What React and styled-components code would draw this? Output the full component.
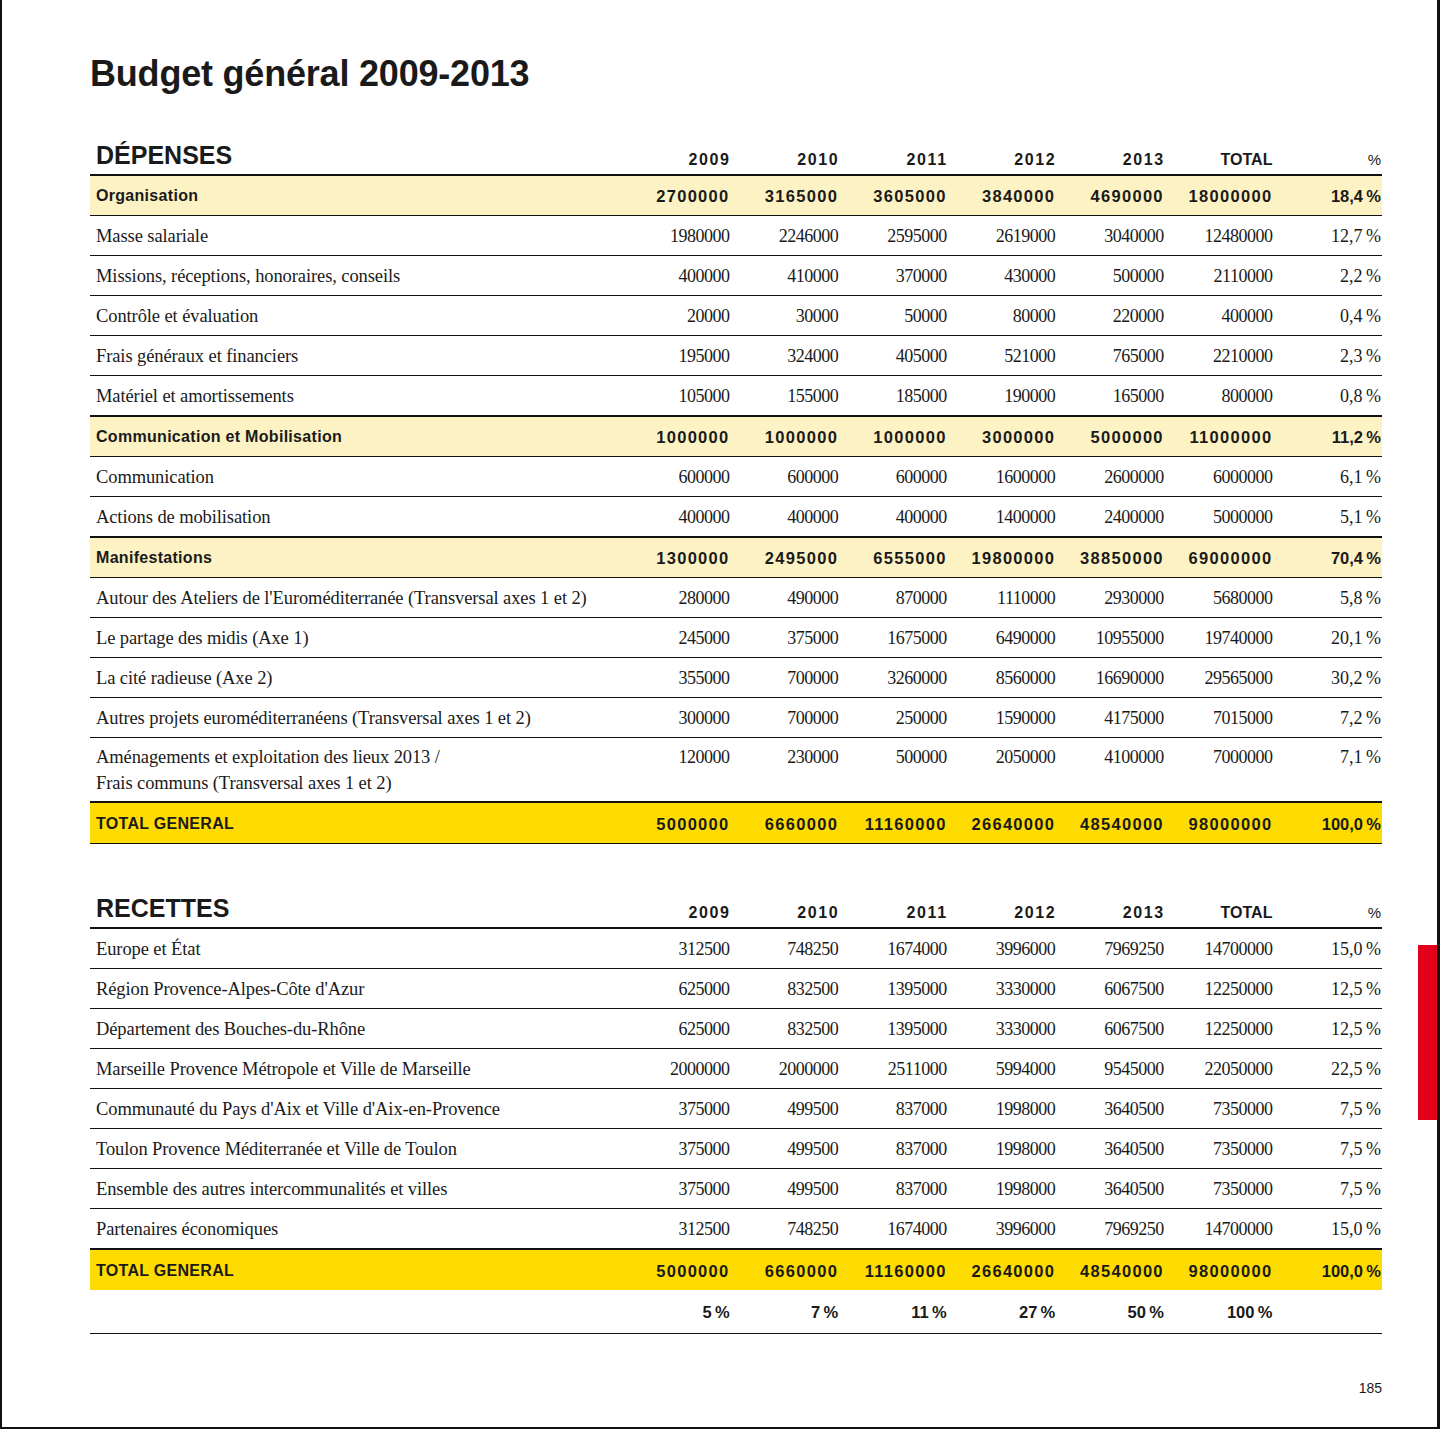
import styled, { createGlobalStyle } from "styled-components"

const GlobalStyle = createGlobalStyle`
  html, body { margin: 0; padding: 0; background: #fff; }
  * { box-sizing: border-box; }
`

const NBSP = "\u202f"

const depenses = [
  { kind: "group", label: "Organisation", v: ["2700000", "3165000", "3605000", "3840000", "4690000", "18000000", "18,4"] },
  { label: "Masse salariale", v: ["1980000", "2246000", "2595000", "2619000", "3040000", "12480000", "12,7"] },
  { label: "Missions, réceptions, honoraires, conseils", v: ["400000", "410000", "370000", "430000", "500000", "2110000", "2,2"] },
  { label: "Contrôle et évaluation", v: ["20000", "30000", "50000", "80000", "220000", "400000", "0,4"] },
  { label: "Frais généraux et financiers", v: ["195000", "324000", "405000", "521000", "765000", "2210000", "2,3"] },
  { label: "Matériel et amortissements", v: ["105000", "155000", "185000", "190000", "165000", "800000", "0,8"] },
  { kind: "group", rule: true, label: "Communication et Mobilisation", v: ["1000000", "1000000", "1000000", "3000000", "5000000", "11000000", "11,2"] },
  { label: "Communication", v: ["600000", "600000", "600000", "1600000", "2600000", "6000000", "6,1"] },
  { label: "Actions de mobilisation", v: ["400000", "400000", "400000", "1400000", "2400000", "5000000", "5,1"] },
  { kind: "group", rule: true, label: "Manifestations", v: ["1300000", "2495000", "6555000", "19800000", "38850000", "69000000", "70,4"] },
  { label: "Autour des Ateliers de l'Euroméditerranée (Transversal axes 1 et 2)", v: ["280000", "490000", "870000", "1110000", "2930000", "5680000", "5,8"] },
  { label: "Le partage des midis (Axe 1)", v: ["245000", "375000", "1675000", "6490000", "10955000", "19740000", "20,1"] },
  { label: "La cité radieuse (Axe 2)", v: ["355000", "700000", "3260000", "8560000", "16690000", "29565000", "30,2"] },
  { label: "Autres projets euroméditerranéens (Transversal axes 1 et 2)", v: ["300000", "700000", "250000", "1590000", "4175000", "7015000", "7,2"] },
  { multi: true, label: ["Aménagements et exploitation des lieux 2013 /", "Frais communs (Transversal axes 1 et 2)"], v: ["120000", "230000", "500000", "2050000", "4100000", "7000000", "7,1"] },
  { kind: "total", rule: true, label: "TOTAL GENERAL", v: ["5000000", "6660000", "11160000", "26640000", "48540000", "98000000", "100,0"] },
]

const recettes = [
  { label: "Europe et État", v: ["312500", "748250", "1674000", "3996000", "7969250", "14700000", "15,0"] },
  { label: "Région Provence-Alpes-Côte d'Azur", v: ["625000", "832500", "1395000", "3330000", "6067500", "12250000", "12,5"] },
  { label: "Département des Bouches-du-Rhône", v: ["625000", "832500", "1395000", "3330000", "6067500", "12250000", "12,5"] },
  { label: "Marseille Provence Métropole et Ville de Marseille", v: ["2000000", "2000000", "2511000", "5994000", "9545000", "22050000", "22,5"] },
  { label: "Communauté du Pays d'Aix et Ville d'Aix-en-Provence", v: ["375000", "499500", "837000", "1998000", "3640500", "7350000", "7,5"] },
  { label: "Toulon Provence Méditerranée et Ville de Toulon", v: ["375000", "499500", "837000", "1998000", "3640500", "7350000", "7,5"] },
  { label: "Ensemble des autres intercommunalités et villes", v: ["375000", "499500", "837000", "1998000", "3640500", "7350000", "7,5"] },
  { label: "Partenaires économiques", v: ["312500", "748250", "1674000", "3996000", "7969250", "14700000", "15,0"] },
  { kind: "total", rule: true, label: "TOTAL GENERAL", v: ["5000000", "6660000", "11160000", "26640000", "48540000", "98000000", "100,0"] },
]

const shares = ["5", "7", "11", "27", "50", "100"]
const years = ["2009", "2010", "2011", "2012", "2013"]

const sans = '"Liberation Sans", Arial, sans-serif'
const serif = '"Liberation Serif", "Times New Roman", serif'

const Page = styled.div`
  position: relative;
  width: 1440px;
  height: 1429px;
  padding: 54px 55px 0 88px;
  border-left: 2px solid #111;
  border-right: 3px solid #111;
  border-bottom: 2px solid #111;
  background: #fff;
  color: #1a1a1a;
  display: flex;
  flex-direction: column;
`

const Title = styled.h1`
  margin: 0 0 47px 0;
  font-family: ${sans};
  font-weight: 700;
  font-size: 36px;
  line-height: 40px;
  letter-spacing: -0.2px;
`

const Table = styled.section`
  display: flex;
  flex-direction: column;
  margin-bottom: ${(p) => p.$gap || 0}px;
`

const cols = "532px repeat(7, 1fr)"

const Head = styled.div`
  display: grid;
  grid-template-columns: ${cols};
  align-items: end;
  height: 35px;
  padding-bottom: 8px;
  border-bottom: 2px solid #111;
`

const SectionName = styled.h2`
  margin: 0;
  padding-left: 6px;
  font-family: ${sans};
  font-weight: 700;
  font-size: 25px;
  line-height: 28px;
`

const HeadCell = styled.div`
  text-align: right;
  padding-right: ${(p) => (p.$tight ? 1 : 0)}px;
  font-family: ${sans};
  font-size: ${(p) => (p.$light ? 15 : 16)}px;
  font-weight: ${(p) => (p.$light ? 400 : 700)};
  letter-spacing: ${(p) => (p.$tight ? 0 : 1.6)}px;
  line-height: 18px;
`

const Row = styled.div`
  display: grid;
  grid-template-columns: ${cols};
  align-items: ${(p) => (p.$multi ? "start" : "center")};
  min-height: ${(p) => (p.$rule ? 41 : 40)}px;
  border-top: ${(p) => (p.$rule ? "1px solid #111" : "none")};
  border-bottom: ${(p) => (p.$last ? "0" : "1px solid #111")};
  background: ${(p) =>
    p.$kind === "group" ? "#fdf2c3" : p.$kind === "total" ? "#ffdc00" : "transparent"};
`

const EndRule = styled.div`
  border-top: 1px solid #111;
`

const Label = styled.div`
  padding: 6px 0 5px 6px;
  line-height: 26px;
  font-family: ${(p) => (p.$bold ? sans : serif)};
  font-weight: ${(p) => (p.$bold ? 700 : 400)};
  font-size: ${(p) => (p.$bold ? 16 : 18.5)}px;
  letter-spacing: ${(p) => (p.$bold ? 0.3 : -0.1)}px;
  white-space: nowrap;
`

const Num = styled.div`
  padding: 6px 1px 5px 0;
  line-height: 26px;
  text-align: right;
  white-space: nowrap;
  font-family: ${(p) => (p.$bold ? sans : serif)};
  font-weight: ${(p) => (p.$bold ? 700 : 400)};
  font-size: ${(p) => (p.$bold ? 16.5 : 18)}px;
  letter-spacing: ${(p) => (p.$bold ? 1.3 : -0.5)}px;
`

const ShareRow = styled.div`
  display: grid;
  grid-template-columns: ${cols};
  align-items: center;
  height: 44px;
  border-bottom: 1px solid #111;
`

const Tab = styled.div`
  position: absolute;
  right: 0;
  top: 945px;
  width: 19px;
  height: 175px;
  background: #e2001a;
`

const Folio = styled.div`
  margin-top: auto;
  margin-bottom: 31px;
  text-align: right;
  font-family: ${sans};
  font-size: 14px;
  line-height: 16px;
`

const Header = ({ name }) => (
  <Head>
    <SectionName>{name}</SectionName>
    {years.map((y) => (
      <HeadCell key={y}>{y}</HeadCell>
    ))}
    <HeadCell $tight>TOTAL</HeadCell>
    <HeadCell $tight $light>%</HeadCell>
  </Head>
)

const Line = ({ row, last }) => {
  const bold = row.kind === "group" || row.kind === "total"
  const label = Array.isArray(row.label) ? (
    <>
      {row.label[0]}
      <br />
      {row.label[1]}
    </>
  ) : (
    row.label
  )
  return (
    <Row $kind={row.kind} $rule={row.rule} $multi={row.multi} $last={last}>
      <Label $bold={bold}>{label}</Label>
      {row.v.map((n, i) => (
        <Num key={i} $bold={bold}>
          {i === 6 ? n + NBSP + "%" : n}
        </Num>
      ))}
    </Row>
  )
}

export default function App() {
  return (
    <>
      <GlobalStyle />
      <Page>
        <Title>Budget général 2009-2013</Title>

        <Table $gap={50}>
          <Header name="DÉPENSES" />
          {depenses.map((r, i) => (
            <Line key={i} row={r} last={i === depenses.length - 1} />
          ))}
          <EndRule />
        </Table>

        <Table>
          <Header name="RECETTES" />
          {recettes.map((r, i) => (
            <Line key={i} row={r} last={i === recettes.length - 1} />
          ))}
          <ShareRow>
            <span />
            {shares.map((s) => (
              <Num key={s} $bold>
                {s + NBSP + "%"}
              </Num>
            ))}
          </ShareRow>
        </Table>

        <Folio>185</Folio>
        <Tab />
      </Page>
    </>
  )
}
